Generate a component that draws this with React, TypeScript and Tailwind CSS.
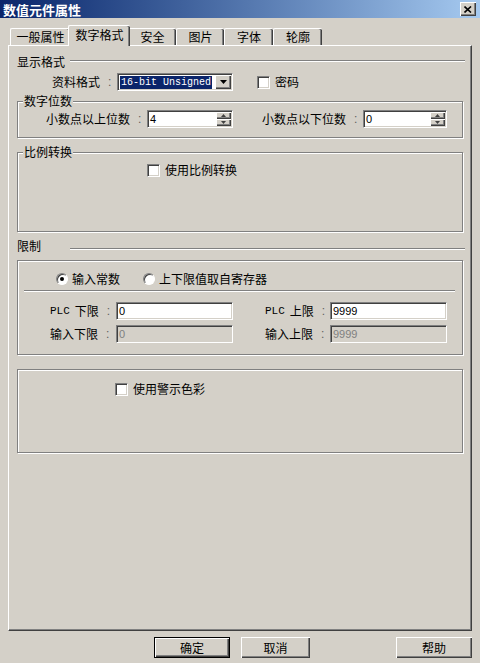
import React from "react";

const sunken =
  "border border-t-[#808080] border-l-[#808080] border-r-white border-b-white shadow-[inset_1px_1px_0_#404040,inset_-1px_-1px_0_#d4d0c8]";
const raised = "shadow-[inset_1px_1px_0_#ffffff,inset_-1px_-1px_0_#404040,inset_-2px_-2px_0_#808080]";
const etchedBox = "border border-[#808080] shadow-[inset_1px_1px_0_#ffffff,1px_1px_0_#ffffff]";
const etchedLine = "h-[2px] border-t border-t-[#808080] border-b border-b-white";

function Label({ text, w, plc }: { text: string; w: string; plc?: boolean }) {
  return (
    <div className={`${w} shrink-0 flex items-center whitespace-nowrap text-[12px] leading-[14px]`}>
      {plc && <span className="font-['Liberation_Mono',monospace] text-[11px] mr-[5px]">PLC</span>}
      <span>{text}</span>
      <span className="ml-[8px] text-[#606060] font-['Liberation_Sans',sans-serif]">:</span>
    </div>
  );
}

function Field({ value, w, disabled, spin }: { value: string; w: string; disabled?: boolean; spin?: boolean }) {
  return (
    <div
      className={`${w} h-[18px] shrink-0 flex items-center pl-[2px] ${sunken} ${
        disabled ? "bg-[#d4d0c8] text-[#808080]" : "bg-white text-black"
      }`}
    >
      <span className="flex-1 font-['Liberation_Sans',sans-serif] text-[11px] leading-[14px]">{value}</span>
      {spin && (
        <div className="w-[15px] h-[14px] mr-[1px] flex flex-col">
          <div className={`h-[7px] bg-[#d4d0c8] flex items-center justify-center ${raised}`}>
            <svg width="5" height="3" viewBox="0 0 5 3">
              <path d="M2.5 0L5 3H0Z" fill="#404040" />
            </svg>
          </div>
          <div className={`h-[7px] bg-[#d4d0c8] flex items-center justify-center ${raised}`}>
            <svg width="5" height="3" viewBox="0 0 5 3">
              <path d="M0 0H5L2.5 3Z" fill="#404040" />
            </svg>
          </div>
        </div>
      )}
    </div>
  );
}

function Check({ label, className }: { label: string; className?: string }) {
  return (
    <div className={`flex items-center whitespace-nowrap ${className ?? ""}`}>
      <span className={`w-[13px] h-[13px] bg-white ${sunken}`} />
      <span className="ml-[5px] text-[12px] leading-[14px]">{label}</span>
    </div>
  );
}

function Radio({ label, checked }: { label: string; checked?: boolean }) {
  return (
    <div className="flex items-center whitespace-nowrap">
      <span className="w-[12px] h-[12px] rounded-full bg-white border border-t-[#808080] border-l-[#808080] border-r-white border-b-white shadow-[inset_1px_1px_0_#404040] flex items-center justify-center">
        {checked && <span className="w-[4px] h-[4px] rounded-full bg-black" />}
      </span>
      <span className="ml-[4px] text-[12px] leading-[14px]">{label}</span>
    </div>
  );
}

function Group({ title, className, children }: { title?: string; className: string; children?: React.ReactNode }) {
  return (
    <div className={`relative ml-[8px] w-[446px] ${etchedBox} ${className}`}>
      {title && (
        <span className="absolute -top-[8px] left-[5px] px-[1px] bg-[#d4d0c8] text-[12px] leading-[14px] whitespace-nowrap">
          {title}
        </span>
      )}
      {children}
    </div>
  );
}

function Tab({ label, w, active }: { label: string; w: string; active?: boolean }) {
  if (active) {
    return (
      <div
        className={`${w} h-[21px] -mx-[2px] -mb-[1px] relative z-10 bg-[#d4d0c8] flex items-center justify-center border-t border-l border-t-white border-l-white rounded-t-[2px] shadow-[inset_-1px_0_0_#404040,inset_-2px_0_0_#808080]`}
      >
        <span className="text-[12px] leading-[14px] -mt-[2px]">{label}</span>
      </div>
    );
  }
  return (
    <div
      className={`${w} h-[17px] bg-[#d4d0c8] flex items-center justify-center border-t border-l border-t-white border-l-white rounded-t-[2px] shadow-[inset_-1px_0_0_#404040,inset_-2px_0_0_#808080]`}
    >
      <span className="text-[12px] leading-[14px]">{label}</span>
    </div>
  );
}

function Button({ label, w, isDefault }: { label: string; w: string; isDefault?: boolean }) {
  return (
    <div
      className={`${w} h-[21px] flex items-center justify-center bg-[#d4d0c8] ${
        isDefault ? "border border-black" : ""
      } ${raised}`}
    >
      <span className="text-[12px] leading-[14px]">{label}</span>
    </div>
  );
}

export default function App() {
  return (
    <div className="w-[480px] h-[663px] overflow-hidden bg-[#d4d0c8] text-black font-['Noto_Sans_CJK_SC','Noto_Sans',sans-serif] select-none">
      {/* title bar */}
      <div className="h-[18px] flex items-center pl-[3px] pr-[4px] bg-linear-to-r from-[#0a246a] to-[#a6caf0]">
        <span className="flex-1 text-white font-bold text-[13px] leading-[15px]">数值元件属性</span>
        <div className={`w-[16px] h-[14px] bg-[#d4d0c8] flex items-center justify-center ${raised}`}>
          <svg width="8" height="7" viewBox="0 0 8 7">
            <path d="M0.5 0.5L7 6.5M7 0.5L0.5 6.5" stroke="#000" strokeWidth="1.6" />
          </svg>
        </div>
      </div>

      <div className="px-[8px] pt-[7px]">
        {/* tabs */}
        <div className="h-[20px] flex items-end ml-[2px]">
          <Tab label="一般属性" w="w-[60px]" />
          <Tab label="数字格式" w="w-[62px]" active />
          <Tab label="安全" w="w-[48px]" />
          <Tab label="图片" w="w-[48px]" />
          <Tab label="字体" w="w-[49px]" />
          <Tab label="轮廓" w="w-[49px]" />
        </div>

        {/* panel */}
        <div className="w-[464px] h-[586px] flex flex-col border-t border-l border-t-white border-l-white border-r border-b border-r-[#404040] border-b-[#404040] shadow-[inset_-1px_-1px_0_#808080]">
          <div className="flex h-[14px] mt-[9px] ml-[8px] mr-[6px]">
            <span className="w-[53px] shrink-0 text-[12px] leading-[14px]">显示格式</span>
            <div className={`flex-1 mt-[5px] ${etchedLine}`} />
          </div>

          <div className="flex items-center h-[18px] mt-[4px] ml-[43px]">
            <Label text="资料格式" w="w-[65px]" />
            <div className={`w-[116px] h-[18px] flex items-center bg-white pl-[2px] pr-[1px] ${sunken}`}>
              <span className="bg-[#0a246a] text-white font-['Liberation_Mono',monospace] text-[10px] leading-[13px] px-[1px]">
                16-bit Unsigned
              </span>
              <span className="flex-1" />
              <div className={`w-[16px] h-[14px] bg-[#d4d0c8] flex items-center justify-center ${raised}`}>
                <svg width="7" height="4" viewBox="0 0 7 4">
                  <path d="M0 0H7L3.5 4Z" fill="#000" />
                </svg>
              </div>
            </div>
            <Check label="密码" className="ml-[24px]" />
          </div>

          <Group title="数字位数" className="h-[37px] mt-[10px] pt-[8px]">
            <div className="flex items-center pl-[28px]">
              <Label text="小数点以上位数" w="w-[101px]" />
              <Field value="4" w="w-[86px]" spin />
              <div className="w-[29px] shrink-0" />
              <Label text="小数点以下位数" w="w-[101px]" />
              <Field value="0" w="w-[84px]" spin />
            </div>
          </Group>

          <Group title="比例转换" className="h-[80px] mt-[14px] pt-[10px]">
            <Check label="使用比例转换" className="ml-[129px]" />
          </Group>

          <div className="flex h-[14px] mt-[7px] ml-[8px] mr-[6px]">
            <span className="w-[53px] shrink-0 text-[12px] leading-[14px]">限制</span>
            <div className={`flex-1 mt-[9px] ${etchedLine}`} />
          </div>

          <Group className="h-[95px] mt-[7px] pt-[11px]">
            <div className="flex items-center h-[14px] pl-[38px]">
              <Radio label="输入常数" checked />
              <div className="w-[23px]" />
              <Radio label="上下限值取自寄存器" />
            </div>
            <div className={`mt-[4px] ml-[6px] mr-[7px] ${etchedLine}`} />
            <div className="flex items-center mt-[10px] pl-[32px]">
              <Label text="下限" w="w-[66px]" plc />
              <Field value="0" w="w-[117px]" />
              <div className="w-[32px] shrink-0" />
              <Label text="上限" w="w-[65px]" plc />
              <Field value="9999" w="w-[117px]" />
            </div>
            <div className="flex items-center mt-[5px] pl-[32px]">
              <Label text="输入下限" w="w-[66px]" />
              <Field value="0" w="w-[117px]" disabled />
              <div className="w-[32px] shrink-0" />
              <Label text="输入上限" w="w-[65px]" />
              <Field value="9999" w="w-[117px]" disabled />
            </div>
          </Group>

          <Group className="h-[84px] mt-[14px] pt-[12px]">
            <Check label="使用警示色彩" className="ml-[97px]" />
          </Group>
        </div>

        {/* buttons */}
        <div className="flex mt-[6px] pl-[146px]">
          <Button label="确定" w="w-[76px]" isDefault />
          <div className="w-[11px]" />
          <Button label="取消" w="w-[69px]" />
          <div className="w-[86px]" />
          <Button label="帮助" w="w-[76px]" />
        </div>
      </div>
    </div>
  );
}
